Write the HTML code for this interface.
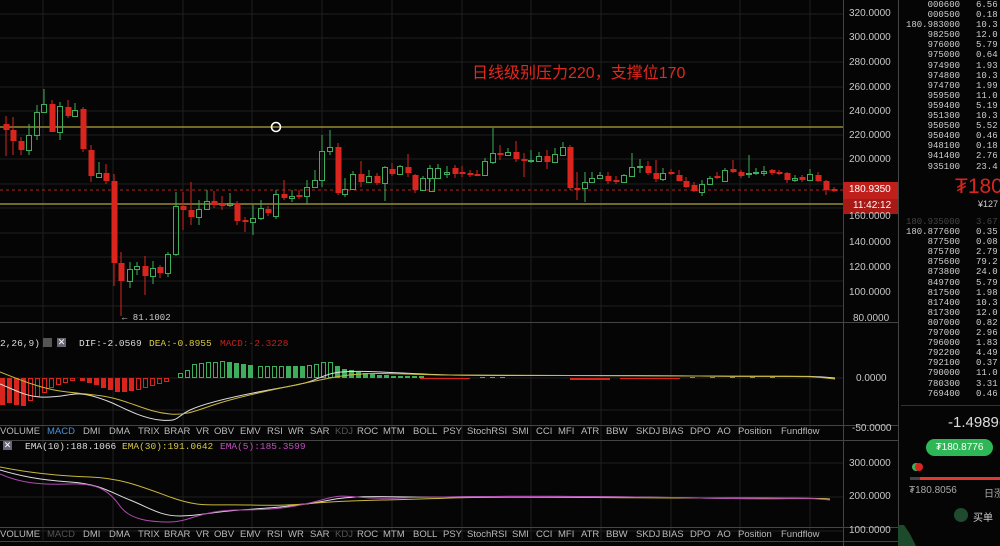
<!DOCTYPE html>
<html><head><meta charset="utf-8"><style>
*{margin:0;padding:0;box-sizing:border-box}
body{width:1000px;height:546px;background:#050505;overflow:hidden;position:relative;font-family:"Liberation Sans","Noto Sans CJK SC",sans-serif;color:#ccc}
.t{position:absolute;white-space:nowrap}
.ax{position:absolute;left:849px;font-size:10px;color:#c8c8c8}
.tab{position:absolute;font-size:9.5px;color:#bbb}
.ob{position:absolute;font-family:"Liberation Mono",monospace;font-size:9px;color:#cfcfcf;line-height:10.1px}
</style></head><body>
<svg width="1000" height="546" style="position:absolute;left:0;top:0">
<g stroke="#1e1e1e" stroke-width="1">
<path d="M43 0V540M113 0V540M183 0V540M252 0V540M322 0V540M392 0V540M462 0V540M531 0V540M601 0V540M671 0V540M740 0V540M810 0V540"/>
<path d="M0 14H843M0 38H843M0 62H843M0 87H843M0 111H843M0 135H843M0 159H843M0 184H843M0 208H843M0 233H843M0 257H843M0 281H843M0 306H843M0 378H843M0 410H843M0 463H843M0 497H843M0 531H843"/>
</g>
<g stroke="#444" stroke-width="1"><path d="M0 322.5H898M0 425.5H898M0 440.5H898M0 527.5H898M0 541.5H898M843.5 0V546M898.5 0V546"/></g>
<path d="M0 127H843M0 204H843" stroke="#b0a63a" stroke-width="1.3"/>
<path d="M0 190H843" stroke="#b82020" stroke-width="1" stroke-dasharray="3,3"/>
<circle cx="276" cy="127" r="4.5" fill="none" stroke="#fff" stroke-width="1.6"/>
<text x="122" y="320" fill="#ccc" font-size="9" font-family="Liberation Mono">← 81.1002</text>
<!-- MACD histogram -->
<g fill="#d9251e">
<rect x="0" y="378" width="5" height="27"/><rect x="7" y="378" width="5" height="25"/><rect x="14" y="378" width="5" height="27"/><rect x="21" y="378" width="5" height="28"/>
<rect x="80" y="378" width="5" height="3"/><rect x="87" y="378" width="5" height="5"/><rect x="94" y="378" width="5" height="7"/><rect x="101" y="378" width="5" height="10"/><rect x="108" y="378" width="5" height="12"/><rect x="115" y="378" width="5" height="14"/><rect x="122" y="378" width="5" height="14"/><rect x="129" y="378" width="5" height="13"/>
</g>
<g fill="none" stroke="#d9251e" stroke-width="1">
<rect x="28.5" y="378.5" width="4" height="22"/><rect x="35.5" y="378.5" width="4" height="18"/><rect x="42.5" y="378.5" width="4" height="14"/><rect x="49.5" y="378.5" width="4" height="9"/><rect x="56.5" y="378.5" width="4" height="6"/><rect x="63.5" y="378.5" width="4" height="4"/><rect x="70.5" y="378.5" width="4" height="2"/>
<rect x="136.5" y="378.5" width="4" height="11"/><rect x="143.5" y="378.5" width="4" height="9"/><rect x="150.5" y="378.5" width="4" height="7"/><rect x="157.5" y="378.5" width="4" height="5"/><rect x="164.5" y="378.5" width="4" height="3"/>
</g>
<g fill="none" stroke="#3fae5c" stroke-width="1">
<rect x="178.5" y="373.5" width="4" height="4"/><rect x="185.5" y="370.5" width="4" height="7"/><rect x="192.5" y="364.5" width="4" height="13"/><rect x="199.5" y="363.5" width="4" height="14"/><rect x="206.5" y="362.5" width="4" height="15"/><rect x="213.5" y="362.5" width="4" height="15"/><rect x="220.5" y="361.5" width="4" height="16"/>
<rect x="258.5" y="366.5" width="4" height="11"/><rect x="265.5" y="366.5" width="4" height="11"/><rect x="272.5" y="366.5" width="4" height="11"/><rect x="279.5" y="366.5" width="4" height="11"/><rect x="307.5" y="365.5" width="4" height="12"/><rect x="314.5" y="364.5" width="4" height="13"/><rect x="321.5" y="362.5" width="4" height="15"/><rect x="328.5" y="362.5" width="4" height="15"/>
</g>
<g fill="#3fae5c">
<rect x="227" y="362" width="5" height="16"/><rect x="234" y="363" width="5" height="15"/><rect x="241" y="364" width="5" height="14"/><rect x="248" y="365" width="5" height="13"/><rect x="286" y="366" width="5" height="12"/><rect x="293" y="366" width="5" height="12"/><rect x="300" y="366" width="5" height="12"/>
<rect x="335" y="366" width="5" height="12"/><rect x="342" y="369" width="5" height="9"/><rect x="349" y="370" width="5" height="8"/><rect x="356" y="372" width="5" height="6"/><rect x="363" y="373" width="5" height="5"/><rect x="370" y="374" width="5" height="4"/><rect x="377" y="375" width="5" height="3"/><rect x="384" y="375" width="5" height="3"/><rect x="391" y="376" width="5" height="2"/><rect x="398" y="376" width="5" height="2"/><rect x="405" y="376" width="5" height="2"/><rect x="412" y="376" width="5" height="2"/><rect x="419" y="376" width="5" height="2"/>
<rect x="480" y="377" width="5" height="1"/><rect x="490" y="377" width="5" height="1"/><rect x="500" y="377" width="5" height="1"/>
<rect x="690" y="377" width="5" height="1"/><rect x="710" y="377" width="5" height="1"/><rect x="730" y="377" width="5" height="1"/><rect x="750" y="377" width="5" height="1"/><rect x="770" y="377" width="5" height="1"/>
</g>
<g fill="#d9251e"><rect x="570" y="378" width="40" height="2"/><rect x="620" y="378" width="60" height="1"/><rect x="420" y="378" width="50" height="1"/></g>
<path d="M0 384 C15 390 25 396 40 397 S65 395 75 394 S100 398 110 402 S140 418 160 420 S175 417 190 410 S240 395 280 388 S310 380 330 374 S400 374 450 375 S600 375 700 376 S800 375 835 378" fill="none" stroke="#ddd" stroke-width="1"/>
<path d="M0 372 C20 380 40 388 60 391 S100 394 120 400 S150 412 170 414 S200 408 230 400 S290 386 330 378 S400 375 450 375 S600 375 700 376 S800 375 835 379" fill="none" stroke="#c9b83a" stroke-width="1"/>
<!-- EMA -->
<path d="M0 470 C20 476 40 480 70 482 S110 492 130 500 S160 516 180 516 S210 512 240 510 S300 506 330 500 S400 498 450 497 S600 496 700 498 S800 497 830 499" fill="none" stroke="#ddd" stroke-width="1"/>
<path d="M0 467 C30 473 60 476 90 477 S140 486 170 497 S210 504 250 505 S300 504 330 502 S400 500 450 498 S600 498 700 498 S800 498 830 499" fill="none" stroke="#c9b83a" stroke-width="1"/>
<path d="M0 474 C20 483 40 485 70 484 S110 492 120 506 S150 522 170 522 S200 510 240 510 S300 506 325 499 S350 500 400 498 S600 496 700 498 S800 497 830 500" fill="none" stroke="#b04ab0" stroke-width="1"/>
<rect x="843" y="182" width="55" height="17" fill="#c0201c"/>
<rect x="843" y="199" width="55" height="15" fill="#a81a16"/>
<rect x="910" y="477" width="90" height="3" fill="#e03a30"/><rect x="910" y="477" width="10" height="3" fill="#444"/>
<circle cx="961" cy="515" r="7" fill="#1f4a2e"/>
<path d="M898 525 L904 525 L910 534 L916 546 L898 546Z" fill="#1d4a2a"/>
<circle cx="916" cy="467" r="4" fill="#3fae5c"/><circle cx="919" cy="467" r="4" fill="#d9251e"/>
<path d="M901 405.5H1000" stroke="#333"/>
</svg>
<svg width="843" height="322" style="position:absolute;left:0;top:0">
<g stroke-width="1">
<g stroke="#d9251e" fill="#d9251e">
<path d="M6 116V156M13 117V155M21 137V155M52 100V132M68 100V118M83 107V152M91 145V182M106 164V184M114 174V286M121 252V316M145 256V295M160 265V278M183 192V230M191 182V225M214 191V208M222 196V210M237 201V225M245 217V232M268 206V216M284 180V200M299 190V199M338 143V195M361 161V187M377 173V185M392 163V176M408 154V177M415 174V193M455 165V178M462 166V177M470 170V177M477 170V176M500 145V160M516 141V162M524 153V177M547 150V169M570 145V190M577 172V200M608 172V184M616 176V184M648 161V175M656 160V182M671 169V175M679 170V181M686 177V188M694 182V192M717 172V179M733 160V173M741 170V178M772 169V175M779 170V175M787 172V183M802 175V182M818 172V182M826 180V195M834 187V192"/>
</g>
<g fill="#d9251e">
<rect x="3.5" y="124" width="6" height="6"/><rect x="10.5" y="130" width="6" height="11"/><rect x="18.5" y="141" width="6" height="9"/><rect x="49.5" y="104" width="6" height="28"/><rect x="65.5" y="107" width="6" height="9"/><rect x="80.5" y="109" width="6" height="40"/><rect x="88.5" y="150" width="6" height="26"/><rect x="103.5" y="173" width="6" height="8"/><rect x="111.5" y="181" width="6" height="82"/><rect x="118.5" y="263" width="6" height="18"/><rect x="142.5" y="266" width="6" height="10"/><rect x="157.5" y="267" width="6" height="6"/><rect x="180.5" y="206" width="6" height="4"/><rect x="188.5" y="210" width="6" height="7"/><rect x="211.5" y="201" width="6" height="4"/><rect x="219.5" y="204" width="6" height="2"/><rect x="234.5" y="203" width="6" height="18"/><rect x="242.5" y="220" width="6" height="2"/><rect x="265.5" y="209" width="6" height="4"/><rect x="281.5" y="194" width="6" height="4"/><rect x="296.5" y="195" width="6" height="2"/><rect x="335.5" y="147" width="6" height="46"/><rect x="358.5" y="174" width="6" height="8"/><rect x="374.5" y="176" width="6" height="7"/><rect x="389.5" y="169" width="6" height="5"/><rect x="405.5" y="167" width="6" height="6"/><rect x="412.5" y="175" width="6" height="15"/>
<rect x="452.5" y="168" width="6" height="6"/><rect x="459.5" y="172" width="6" height="2"/><rect x="467.5" y="173" width="6" height="2"/><rect x="474.5" y="174" width="6" height="2"/><rect x="497.5" y="153" width="6" height="2"/><rect x="513.5" y="152" width="6" height="7"/><rect x="521.5" y="159" width="6" height="2"/><rect x="544.5" y="156" width="6" height="6"/><rect x="567.5" y="147" width="6" height="41"/><rect x="574.5" y="188" width="6" height="2"/><rect x="605.5" y="176" width="6" height="5"/><rect x="613.5" y="180" width="6" height="2"/><rect x="645.5" y="166" width="6" height="7"/><rect x="653.5" y="173" width="6" height="6"/><rect x="668.5" y="172" width="6" height="2"/><rect x="676.5" y="175" width="6" height="6"/><rect x="683.5" y="181" width="6" height="6"/><rect x="691.5" y="185" width="6" height="6"/><rect x="714.5" y="176" width="6" height="2"/><rect x="730.5" y="169" width="6" height="3"/><rect x="738.5" y="172" width="6" height="4"/><rect x="769.5" y="170" width="6" height="3"/><rect x="776.5" y="172" width="6" height="2"/><rect x="784.5" y="173" width="6" height="7"/><rect x="799.5" y="177" width="6" height="3"/><rect x="815.5" y="175" width="6" height="6"/><rect x="823.5" y="181" width="6" height="9"/><rect x="831.5" y="189" width="6" height="2"/>
</g>
<g stroke="#3fae5c" fill="none">
<path d="M29 124V135M29 150V155M37 105V112M37 135V140M44 89V104M60 102V106M60 132V140M75 103V110M99 162V173M130 262V269M130 281V288M137 262V266M137 269V275M153 261V268M153 276V284M168 252V254M168 273V277M176 192V206M176 254V256M199 200V209M199 217V225M207 190V201M230 193V203M230 205V207M253 205V218M253 222V235M261 200V208M261 218V220M276 190V194M276 216V219M292 190V196M292 198V202M307 180V187M307 196V204M315 170V180M322 135V151M322 180V187M330 130V147M330 151V155M345 178V189M345 194V197M353 171V174M369 170V176M385 166V167M385 183V201M400 165V166M423 176V178M430 165V168M430 178V182M438 164V168M447 166V178M485 158V161M493 128V153M493 162V164M508 148V152M531 150V163M539 152V156M555 148V154M563 142V147M585 172V182M585 188V202M592 172V178M600 172V175M624 174V175M632 153V167M640 159V173M663 168V173M663 179V181M702 180V184M702 192V196M710 176V178M725 168V170M749 155V178M756 168V175M764 166V176M795 175V182M810 169V174"/>
<rect x="26.5" y="135.5" width="5" height="15"/><rect x="34.5" y="112.5" width="5" height="23"/><rect x="41.5" y="104.5" width="5" height="8"/><rect x="57.5" y="106.5" width="5" height="26"/><rect x="72.5" y="110.5" width="5" height="6"/><rect x="96.5" y="173.5" width="5" height="4"/><rect x="127.5" y="269.5" width="5" height="12"/><rect x="134.5" y="266.5" width="5" height="3"/><rect x="150.5" y="268.5" width="5" height="8"/><rect x="165.5" y="254.5" width="5" height="19"/><rect x="173.5" y="206.5" width="5" height="48"/><rect x="196.5" y="209.5" width="5" height="8"/><rect x="204.5" y="201.5" width="5" height="8"/><rect x="227.5" y="203.5" width="5" height="2"/><rect x="250.5" y="218.5" width="5" height="4"/><rect x="258.5" y="208.5" width="5" height="10"/><rect x="273.5" y="194.5" width="5" height="22"/><rect x="289.5" y="196.5" width="5" height="2"/><rect x="304.5" y="187.5" width="5" height="9"/><rect x="312.5" y="180.5" width="5" height="7"/><rect x="319.5" y="151.5" width="5" height="29"/><rect x="327.5" y="147.5" width="5" height="4"/><rect x="342.5" y="189.5" width="5" height="5"/><rect x="350.5" y="174.5" width="5" height="15"/><rect x="366.5" y="176.5" width="5" height="6"/><rect x="382.5" y="167.5" width="5" height="16"/><rect x="397.5" y="166.5" width="5" height="8"/><rect x="420.5" y="178.5" width="5" height="12"/><rect x="427.5" y="168.5" width="5" height="10"/><rect x="429.5" y="178.5" width="5" height="13"/><rect x="435.5" y="168.5" width="5" height="10"/><rect x="444.5" y="172.5" width="5" height="2"/><rect x="482.5" y="161.5" width="5" height="14"/><rect x="490.5" y="153.5" width="5" height="9"/><rect x="505.5" y="152.5" width="5" height="3"/><rect x="528.5" y="160.5" width="5" height="1"/><rect x="536.5" y="156.5" width="5" height="5"/><rect x="552.5" y="154.5" width="5" height="8"/><rect x="560.5" y="147.5" width="5" height="8"/><rect x="582.5" y="182.5" width="5" height="6"/><rect x="589.5" y="178.5" width="5" height="4"/><rect x="597.5" y="175.5" width="5" height="3"/><rect x="621.5" y="175.5" width="5" height="7"/><rect x="629.5" y="167.5" width="5" height="9"/><rect x="637.5" y="166.5" width="5" height="1"/><rect x="660.5" y="173.5" width="5" height="6"/><rect x="699.5" y="184.5" width="5" height="8"/><rect x="707.5" y="178.5" width="5" height="6"/><rect x="722.5" y="170.5" width="5" height="11"/><rect x="746.5" y="173.5" width="5" height="1"/><rect x="753.5" y="172.5" width="5" height="1"/><rect x="761.5" y="171.5" width="5" height="2"/><rect x="792.5" y="178.5" width="5" height="2"/><rect x="807.5" y="174.5" width="5" height="6"/>
</g>
</g>
</svg>
<div class="t" style="left:472px;top:59px;font-size:16px;color:#e0281e">日线级别压力220，支撑位170</div>

<div class="ax" style="top:8px">320.0000</div><div class="ax" style="top:32px">300.0000</div><div class="ax" style="top:57px">280.0000</div><div class="ax" style="top:82px">260.0000</div><div class="ax" style="top:106px">240.0000</div><div class="ax" style="top:130px">220.0000</div><div class="ax" style="top:154px">200.0000</div><div class="ax" style="top:211px">160.0000</div><div class="ax" style="top:237px">140.0000</div><div class="ax" style="top:262px">120.0000</div><div class="ax" style="top:287px">100.0000</div><div class="ax" style="left:853px;top:313px">80.0000</div>
<div class="ax" style="top:184px;color:#fff">180.9350</div><div class="ax" style="left:853px;top:200px;color:#fff">11:42:12</div>
<div class="ax" style="left:856px;top:373px">0.0000</div><div class="ax" style="left:852px;top:423px">-50.0000</div>
<div class="ax" style="top:458px">300.0000</div><div class="ax" style="top:491px">200.0000</div><div class="ax" style="top:525px">100.0000</div>

<div class="t" style="left:0;top:338px;font-size:9.5px;font-family:'Liberation Mono',monospace;color:#ddd">2,26,9)</div>
<div class="t" style="left:43px;top:338px;width:9px;height:9px;background:#555"></div>
<div class="t" style="left:57px;top:338px;width:9px;height:9px;background:#667;color:#fff;font-size:9px;line-height:9px;text-align:center">✕</div>
<div class="t" style="left:79px;top:338px;font-size:9.5px;font-family:'Liberation Mono',monospace;color:#ddd">DIF:-2.0569</div>
<div class="t" style="left:149px;top:338px;font-size:9.5px;font-family:'Liberation Mono',monospace;color:#d8c840">DEA:-0.8955</div>
<div class="t" style="left:220px;top:338px;font-size:9.5px;font-family:'Liberation Mono',monospace;color:#b22">MACD:-2.3228</div>

<div class="t" style="left:3px;top:441px;width:9px;height:9px;background:#667;color:#fff;font-size:9px;line-height:9px;text-align:center">✕</div>
<div class="t" style="left:25px;top:441px;font-size:9.5px;font-family:'Liberation Mono',monospace;color:#ddd">EMA(10):188.1066</div>
<div class="t" style="left:122px;top:441px;font-size:9.5px;font-family:'Liberation Mono',monospace;color:#d8c840">EMA(30):191.0642</div>
<div class="t" style="left:220px;top:441px;font-size:9.5px;font-family:'Liberation Mono',monospace;color:#c050c0">EMA(5):185.3599</div>

<div style="position:absolute;left:0;top:426px;width:843px;height:13px">
<span class="tab" style="left:0">VOLUME</span><span class="tab" style="left:47px;color:#4a90d9">MACD</span><span class="tab" style="left:83px">DMI</span><span class="tab" style="left:109px">DMA</span><span class="tab" style="left:138px">TRIX</span><span class="tab" style="left:164px">BRAR</span><span class="tab" style="left:196px">VR</span><span class="tab" style="left:214px">OBV</span><span class="tab" style="left:240px">EMV</span><span class="tab" style="left:267px">RSI</span><span class="tab" style="left:288px">WR</span><span class="tab" style="left:310px">SAR</span><span class="tab" style="left:335px;color:#555">KDJ</span><span class="tab" style="left:357px">ROC</span><span class="tab" style="left:383px">MTM</span><span class="tab" style="left:413px">BOLL</span><span class="tab" style="left:443px">PSY</span><span class="tab" style="left:467px">StochRSI</span><span class="tab" style="left:512px">SMI</span><span class="tab" style="left:536px">CCI</span><span class="tab" style="left:558px">MFI</span><span class="tab" style="left:581px">ATR</span><span class="tab" style="left:606px">BBW</span><span class="tab" style="left:636px">SKDJ</span><span class="tab" style="left:662px">BIAS</span><span class="tab" style="left:690px">DPO</span><span class="tab" style="left:717px">AO</span><span class="tab" style="left:738px">Position</span><span class="tab" style="left:781px">Fundflow</span>
</div>
<div style="position:absolute;left:0;top:529px;width:843px;height:13px">
<span class="tab" style="left:0">VOLUME</span><span class="tab" style="left:47px;color:#555">MACD</span><span class="tab" style="left:83px">DMI</span><span class="tab" style="left:109px">DMA</span><span class="tab" style="left:138px">TRIX</span><span class="tab" style="left:164px">BRAR</span><span class="tab" style="left:196px">VR</span><span class="tab" style="left:214px">OBV</span><span class="tab" style="left:240px">EMV</span><span class="tab" style="left:267px">RSI</span><span class="tab" style="left:288px">WR</span><span class="tab" style="left:310px">SAR</span><span class="tab" style="left:335px;color:#555">KDJ</span><span class="tab" style="left:357px">ROC</span><span class="tab" style="left:383px">MTM</span><span class="tab" style="left:413px">BOLL</span><span class="tab" style="left:443px">PSY</span><span class="tab" style="left:467px">StochRSI</span><span class="tab" style="left:512px">SMI</span><span class="tab" style="left:536px">CCI</span><span class="tab" style="left:558px">MFI</span><span class="tab" style="left:581px">ATR</span><span class="tab" style="left:606px">BBW</span><span class="tab" style="left:636px">SKDJ</span><span class="tab" style="left:662px">BIAS</span><span class="tab" style="left:690px">DPO</span><span class="tab" style="left:717px">AO</span><span class="tab" style="left:738px">Position</span><span class="tab" style="left:781px">Fundflow</span>
</div>

<div class="ob" style="left:0;top:0;width:1000px">
<div style="position:absolute;left:900px;top:0;width:60px;text-align:right">000600<br>000500<br>180.983000<br>982500<br>976000<br>975000<br>974900<br>974800<br>974700<br>959500<br>959400<br>951300<br>950500<br>950400<br>948100<br>941400<br>935100</div>
<div style="position:absolute;left:976px;top:0">6.56<br>0.18<br>10.3<br>12.0<br>5.79<br>0.64<br>1.93<br>10.3<br>1.99<br>11.0<br>5.19<br>10.3<br>5.52<br>0.46<br>0.18<br>2.76<br>23.4</div>
<div style="position:absolute;left:900px;top:217px;width:60px;text-align:right"><span style="color:#444">180.935000</span><br>180.877600<br>877500<br>875700<br>875600<br>873800<br>849700<br>817500<br>817400<br>817300<br>807000<br>797000<br>796000<br>792200<br>792100<br>790000<br>780300<br>769400</div>
<div style="position:absolute;left:976px;top:217px"><span style="color:#444">3.67</span><br>0.35<br>0.08<br>2.79<br>79.2<br>24.0<br>5.79<br>1.98<br>10.3<br>12.0<br>0.82<br>2.96<br>1.83<br>4.49<br>0.37<br>11.0<br>3.31<br>0.46</div>
</div>
<div class="t" style="left:955px;top:175px;font-size:21px;color:#d9251e">₮180.</div>
<div class="t" style="left:978px;top:199px;font-size:9px;color:#ccc">¥127</div>
<div class="t" style="left:948px;top:414px;font-size:15px;color:#ddd">-1.4989(</div>
<div class="t" style="left:926px;top:439px;width:67px;height:17px;border-radius:9px;background:#2fb757;color:#fff;font-size:10px;line-height:17px;text-align:center">₮180.8776</div>
<div class="t" style="left:909px;top:485px;font-size:10px;color:#aaa">₮180.8056</div>
<div class="t" style="left:984px;top:485px;font-size:10px;color:#aaa">日涨</div>
<div class="t" style="left:973px;top:509px;font-size:10px;color:#ccc">买单</div>
</body></html>
